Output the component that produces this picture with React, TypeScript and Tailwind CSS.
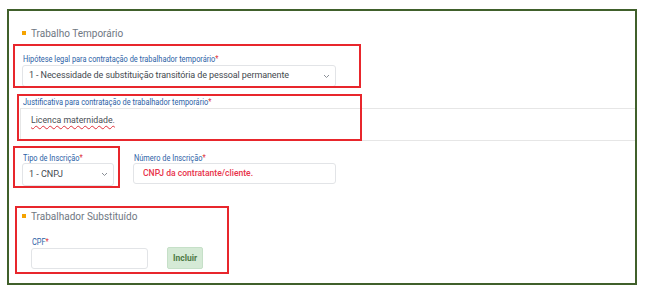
import React from 'react';

const Chevron = () => (
  <svg width="7" height="5" viewBox="0 0 7 5" className="shrink-0">
    <path d="M1 1l2.5 2.5L6 1" fill="none" stroke="#8a8f96" strokeWidth="1" />
  </svg>
);

const Label = ({ text, className = '' }: { text: string; className?: string }) => (
  <div className={`h-[12px] leading-[12px] whitespace-nowrap ${className}`}>
    <span className="inline-block origin-left scale-x-[0.87] text-[8.5px] text-[#2d62a6] font-['Roboto',sans-serif]">
      {text}
      <span className="text-[#e0323c]">*</span>
    </span>
  </div>
);

const SectionTitle = ({ text }: { text: string }) => (
  <div className="flex items-center h-[16px] pl-[13px]">
    <span className="w-[4px] h-[4px] bg-[#f5a300]" />
    <span className="ml-[5px] text-[10px] text-[#6f7782] font-['Roboto',sans-serif]">{text}</span>
  </div>
);

const Annot = ({ className }: { className: string }) => (
  <div className={`absolute border-2 border-[#e8262c] pointer-events-none ${className}`} />
);

export default function App() {
  return (
    <div className="w-[648px] h-[299px] bg-white pt-[9px] pl-[7px] font-['Roboto',sans-serif]">
      <div className="relative w-[630px] h-[276px] border-2 border-[#40602b]">
        <div className="h-[14px]" />
        <SectionTitle text="Trabalho Temporário" />

        <Label text="Hipótese legal para contratação de trabalhador temporário" className="mt-[10px] pl-[14px]" />
        <div className="mt-[2px] ml-[13px] w-[314px] h-[22px] border border-[#e2e4e7] rounded-[3px] flex items-center justify-between pl-[6px] pr-[5px]">
          <span className="text-[9px] tracking-[-0.1px] text-[#44494f] whitespace-nowrap">
            1 - Necessidade de substituição transitória de pessoal permanente
          </span>
          <Chevron />
        </div>

        <div className="mt-[7px] h-[12px] leading-[12px] pl-[14px] whitespace-nowrap">
          <span className="inline-block origin-left scale-x-[0.87] text-[8.5px] text-[#2d62a6]">
            Justificativa para contratação de trabalhador temporário
            <span className="text-[#e0323c]">*</span>
          </span>
        </div>
        <div className="mt-[2px] ml-[11px] h-[33px] border-y border-l border-[#e6e6e6] pl-[10px] pt-[3px] leading-[12px]">
          <span className="text-[8.75px] text-[#4a4f55] underline decoration-wavy decoration-[#e0323c] decoration-[0.5px] underline-offset-2">
            Licenca maternidade.
          </span>
        </div>

        <div className="mt-[9px] flex">
          <div className="ml-[13px] w-[92px]">
            <Label text="Tipo de Inscrição" className="pl-[1px]" />
            <div className="mt-[1px] h-[23px] border border-[#e2e4e7] rounded-[3px] flex items-center justify-between pl-[6px] pr-[5px]">
              <span className="text-[9px] text-[#44494f]">1 - CNPJ</span>
              <Chevron />
            </div>
          </div>
          <div className="ml-[19px] w-[203px]">
            <Label text="Número de Inscrição" className="pl-[1px]" />
            <div className="mt-[1px] h-[21px] border border-[#e2e4e7] rounded-[3px] flex items-center pl-[9px] whitespace-nowrap">
              <span className="inline-block origin-left scale-x-[0.9] text-[9.5px] font-medium text-[#e8334a]">
                CNPJ da contratante/cliente.
              </span>
            </div>
          </div>
        </div>

        <div className="mt-[22px]">
          <SectionTitle text="Trabalhador Substituído" />
        </div>
        <Label text="CPF" className="mt-[10px] pl-[23px]" />
        <div className="mt-[1px] flex items-center pl-[22px]">
          <div className="w-[117px] h-[21px] border border-[#e2e4e7] rounded-[3px] mt-[1px]" />
          <button className="ml-[19px] w-[36px] h-[22px] bg-[#d5ead6] border border-[#c6e0c8] rounded-[2px] text-[8.5px] font-bold text-[#4d7a45]">
            Incluir
          </button>
        </div>

        <Annot className="left-[4px] top-[33px] w-[348px] h-[44px]" />
        <Annot className="left-[8px] top-[83px] w-[345px] h-[47px]" />
        <Annot className="left-[4px] top-[135px] w-[107px] h-[42px]" />
        <Annot className="left-[6px] top-[195px] w-[214px] h-[68px]" />
      </div>
    </div>
  );
}
